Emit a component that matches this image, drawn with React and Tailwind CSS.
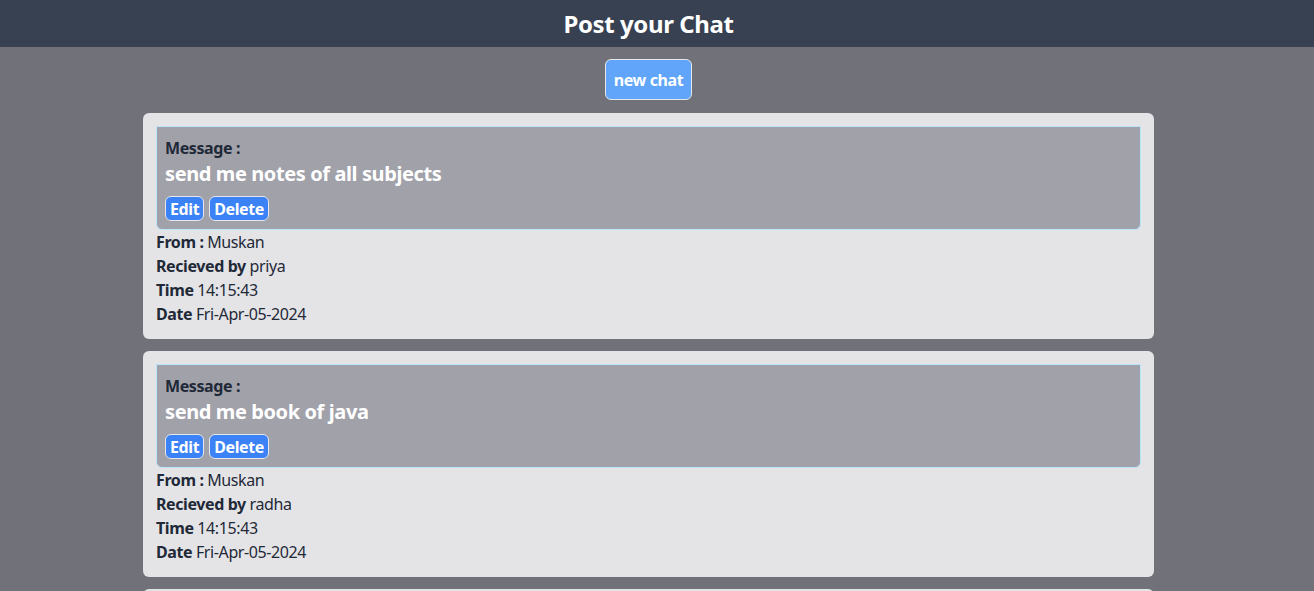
import React from "react";

const chats = [
  { msg: "send me notes of all subjects", from: "Muskan", to: "priya", time: "14:15:43", date: "Fri-Apr-05-2024" },
  { msg: "send me book of java", from: "Muskan", to: "radha", time: "14:15:43", date: "Fri-Apr-05-2024" },
  { msg: "send me notes of dbms", from: "Muskan", to: "priya", time: "14:15:43", date: "Fri-Apr-05-2024" },
];

function Card({ c }) {
  return (
    <div className="bg-[#e4e4e7] rounded-md p-[13px] text-[#1f2937] mb-3">
      <div className="bg-[#a1a1aa] border border-[#bae6fd] rounded-b-md px-2 pt-[9px] pb-2">
        <div className="font-bold leading-6">Message :</div>
        <div className="text-xl font-bold text-white leading-7">{c.msg}</div>
        <div className="flex gap-[5px] mt-[8px]">
          <button className="bg-[#3b82f6] text-white font-bold border border-[#e5e7eb] rounded-md px-1 h-[25px] leading-5">Edit</button>
          <button className="bg-[#3b82f6] text-white font-bold border border-[#e5e7eb] rounded-md px-1 h-[25px] leading-5">Delete</button>
        </div>
      </div>
      <div className="leading-6">
        <div><span className="font-bold">From :</span> Muskan</div>
        <div><span className="font-bold">Recieved by</span> {c.to}</div>
        <div><span className="font-bold">Time</span> {c.time}</div>
        <div><span className="font-bold">Date</span> {c.date}</div>
      </div>
    </div>
  );
}

export default function App() {
  return (
    <div className="min-h-screen bg-[#71717a] tracking-[-0.4px]" style={{ fontFamily: '"Noto Sans", "Open Sans", sans-serif' }}>
      <div className="bg-[#374151] h-[47px]">
        <div className="w-[1297px] h-full flex items-center justify-center">
          <h1 className="text-2xl font-bold text-white">Post your Chat</h1>
        </div>
      </div>
      <div className="w-[1297px]">
        <div className="flex justify-center pt-3 pb-[13px]">
          <button className="bg-[#60a5fa] text-white font-bold border border-[#e5e7eb] rounded-md px-2 h-[41px]">new chat</button>
        </div>
        <div className="w-[1011px] mx-auto">
          {chats.map((c, i) => (
            <Card key={i} c={c} />
          ))}
        </div>
      </div>
    </div>
  );
}
